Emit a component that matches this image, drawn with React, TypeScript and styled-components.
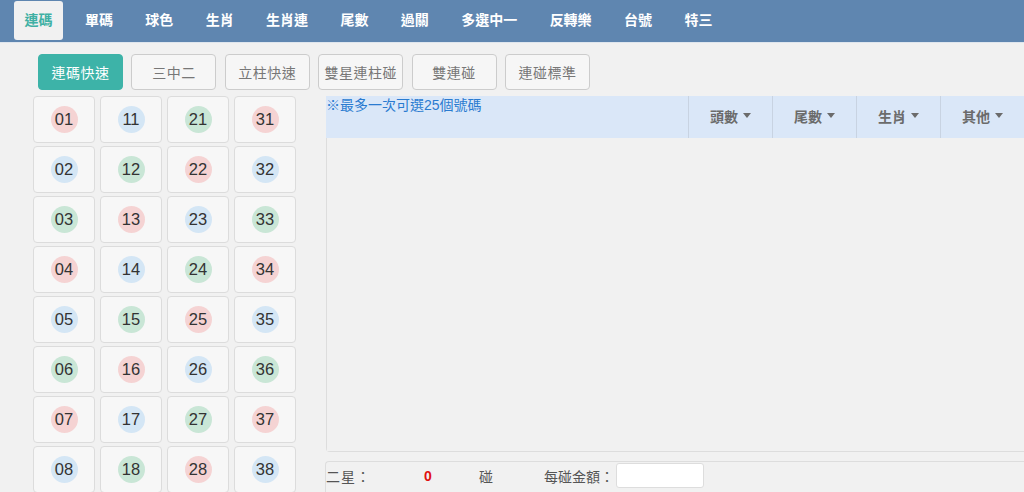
import React from "react";
import styled, { createGlobalStyle } from "styled-components";

const GlobalStyle = createGlobalStyle`
  html, body {
    margin: 0;
    padding: 0;
    background: #f1f1f1;
    font-family: "Liberation Sans", "Noto Sans CJK TC", sans-serif;
    overflow: hidden;
  }
`;

const navItems = [
  "連碼",
  "單碼",
  "球色",
  "生肖",
  "生肖連",
  "尾數",
  "過關",
  "多選中一",
  "反轉樂",
  "台號",
  "特三",
];

const modes = ["連碼快速", "三中二", "立柱快速", "雙星連柱碰", "雙連碰", "連碰標準"];

const filters = ["頭數", "尾數", "生肖", "其他"];

const ballColors = ["#f5d3d3", "#d4e6f5", "#c9e6d6"];

const rows: number[][] = [];
for (let i = 1; i <= 10; i++) {
  rows.push([i, i + 10, i + 20, i + 30]);
}

const pad = (n: number) => (n < 10 ? "0" + n : String(n));

const App = () => {
  return (
    <>
      <GlobalStyle />
      <NavBar>
        {navItems.map((item, i) => (
          <NavItem key={item} $active={i === 0}>
            {item}
          </NavItem>
        ))}
      </NavBar>
      <Content>
        <ModeRow>
          {modes.map((m, i) => (
            <ModeButton key={m} $active={i === 0}>
              {m}
            </ModeButton>
          ))}
        </ModeRow>
        <Main>
          <NumberGrid>
            {rows.flat().map((n) => (
              <Cell key={n}>
                <Ball $color={ballColors[(n - 1) % 3]}>{pad(n)}</Ball>
              </Cell>
            ))}
          </NumberGrid>
          <RightColumn>
            <Panel>
              <PanelHeader>
                <Hint>※最多一次可選25個號碼</Hint>
                {filters.map((f) => (
                  <Filter key={f}>
                    {f}
                    <Caret />
                  </Filter>
                ))}
              </PanelHeader>
              <PanelBody />
            </Panel>
            <BetBox>
              <BetRow>
                <BetLabel>二星：</BetLabel>
                <Count>0</Count>
                <Unit>碰</Unit>
                <AmountLabel>每碰金額：</AmountLabel>
                <AmountInput />
              </BetRow>
            </BetBox>
          </RightColumn>
        </Main>
      </Content>
    </>
  );
};
export default App;

const NavBar = styled.div`
  display: flex;
  align-items: flex-start;
  gap: 11.4px;
  height: 43px;
  padding: 1px 0 0 14px;
  box-sizing: border-box;
  background: #5f86b0;
  border-bottom: 1px solid #dfe6ee;
`;

const NavItem = styled.div<{ $active?: boolean }>`
  height: 39px;
  line-height: 39px;
  padding: 0 10.5px;
  font-size: 14px;
  font-weight: bold;
  color: ${(p) => (p.$active ? "#3fb0a4" : "#ffffff")};
  background: ${(p) => (p.$active ? "#f1f1f1" : "transparent")};
  border-radius: 3px;
  white-space: nowrap;
`;

const Content = styled.div`
  padding: 11px 0 0 33px;
`;

const ModeRow = styled.div`
  display: flex;
  gap: 8.4px;
  margin-left: 5px;
`;

const ModeButton = styled.div<{ $active?: boolean }>`
  width: 85px;
  height: 36px;
  box-sizing: border-box;
  display: flex;
  align-items: center;
  justify-content: center;
  font-size: 14px;
  letter-spacing: 0.5px;
  border-radius: 4px;
  border: 1px solid ${(p) => (p.$active ? "#3db3a8" : "#cccccc")};
  background: ${(p) => (p.$active ? "#3db3a8" : "#f6f6f6")};
  color: ${(p) => (p.$active ? "#ffffff" : "#777777")};
`;

const Main = styled.div`
  display: flex;
  gap: 30px;
  margin-top: 6px;
`;

const NumberGrid = styled.div`
  display: grid;
  grid-template-columns: repeat(4, 62px);
  column-gap: 5px;
  row-gap: 3px;
  flex: none;
`;

const Cell = styled.div`
  height: 47px;
  box-sizing: border-box;
  border: 1px solid #dcdcdc;
  border-radius: 4px;
  background: #f7f7f7;
  display: flex;
  align-items: center;
  justify-content: center;
`;

const Ball = styled.div<{ $color: string }>`
  width: 27px;
  height: 27px;
  border-radius: 50%;
  background: ${(p) => p.$color};
  display: flex;
  align-items: center;
  justify-content: center;
  font-size: 16.5px;
  color: #333333;
`;

const RightColumn = styled.div`
  flex: 1;
  display: flex;
  flex-direction: column;
  gap: 9px;
`;

const Panel = styled.div`
  border: 1px solid #dddddd;
  border-top: none;
  border-right: none;
  border-radius: 0 0 0 4px;
  display: flex;
  flex-direction: column;
`;

const PanelHeader = styled.div`
  display: flex;
  height: 42px;
  background: #dae7f8;
  margin-left: -1px;
`;

const Hint = styled.div`
  flex: 1;
  font-size: 14px;
  color: #2a7bd0;
  padding-top: 1px;
  line-height: 17px;
`;

const Filter = styled.div`
  width: 83px;
  border-left: 1px solid #c8d3e2;
  display: flex;
  align-items: center;
  justify-content: center;
  gap: 3px;
  padding-bottom: 3px;
  font-size: 14px;
  font-weight: bold;
  color: #6b6b6b;
`;

const Caret = styled.span`
  width: 0;
  height: 0;
  border-left: 4px solid transparent;
  border-right: 4px solid transparent;
  border-top: 5px solid #6b6b6b;
  margin-left: 2px;
`;

const PanelBody = styled.div`
  height: 313px;
  background: #f1f1f1;
`;

const BetBox = styled.div`
  border: 1px solid #dddddd;
  border-right: none;
  border-radius: 4px 0 0 0;
  height: 60px;
  margin-left: -1px;
`;

const BetRow = styled.div`
  display: flex;
  align-items: center;
  height: 27px;
  font-size: 14px;
  color: #555555;
  white-space: nowrap;
`;

const BetLabel = styled.div`
  width: 98px;
  flex: none;
  letter-spacing: 1px;
`;

const Count = styled.div`
  width: 55px;
  flex: none;
  color: #e01010;
  font-weight: bold;
`;

const Unit = styled.div`
  width: 65px;
  flex: none;
`;

const AmountLabel = styled.div`
  flex: none;
  margin-right: 2px;
`;

const AmountInput = styled.input`
  width: 88px;
  height: 25px;
  flex: none;
  box-sizing: border-box;
  border: 1px solid #dddddd;
  border-radius: 3px;
  background: #ffffff;
  outline: none;
`;
